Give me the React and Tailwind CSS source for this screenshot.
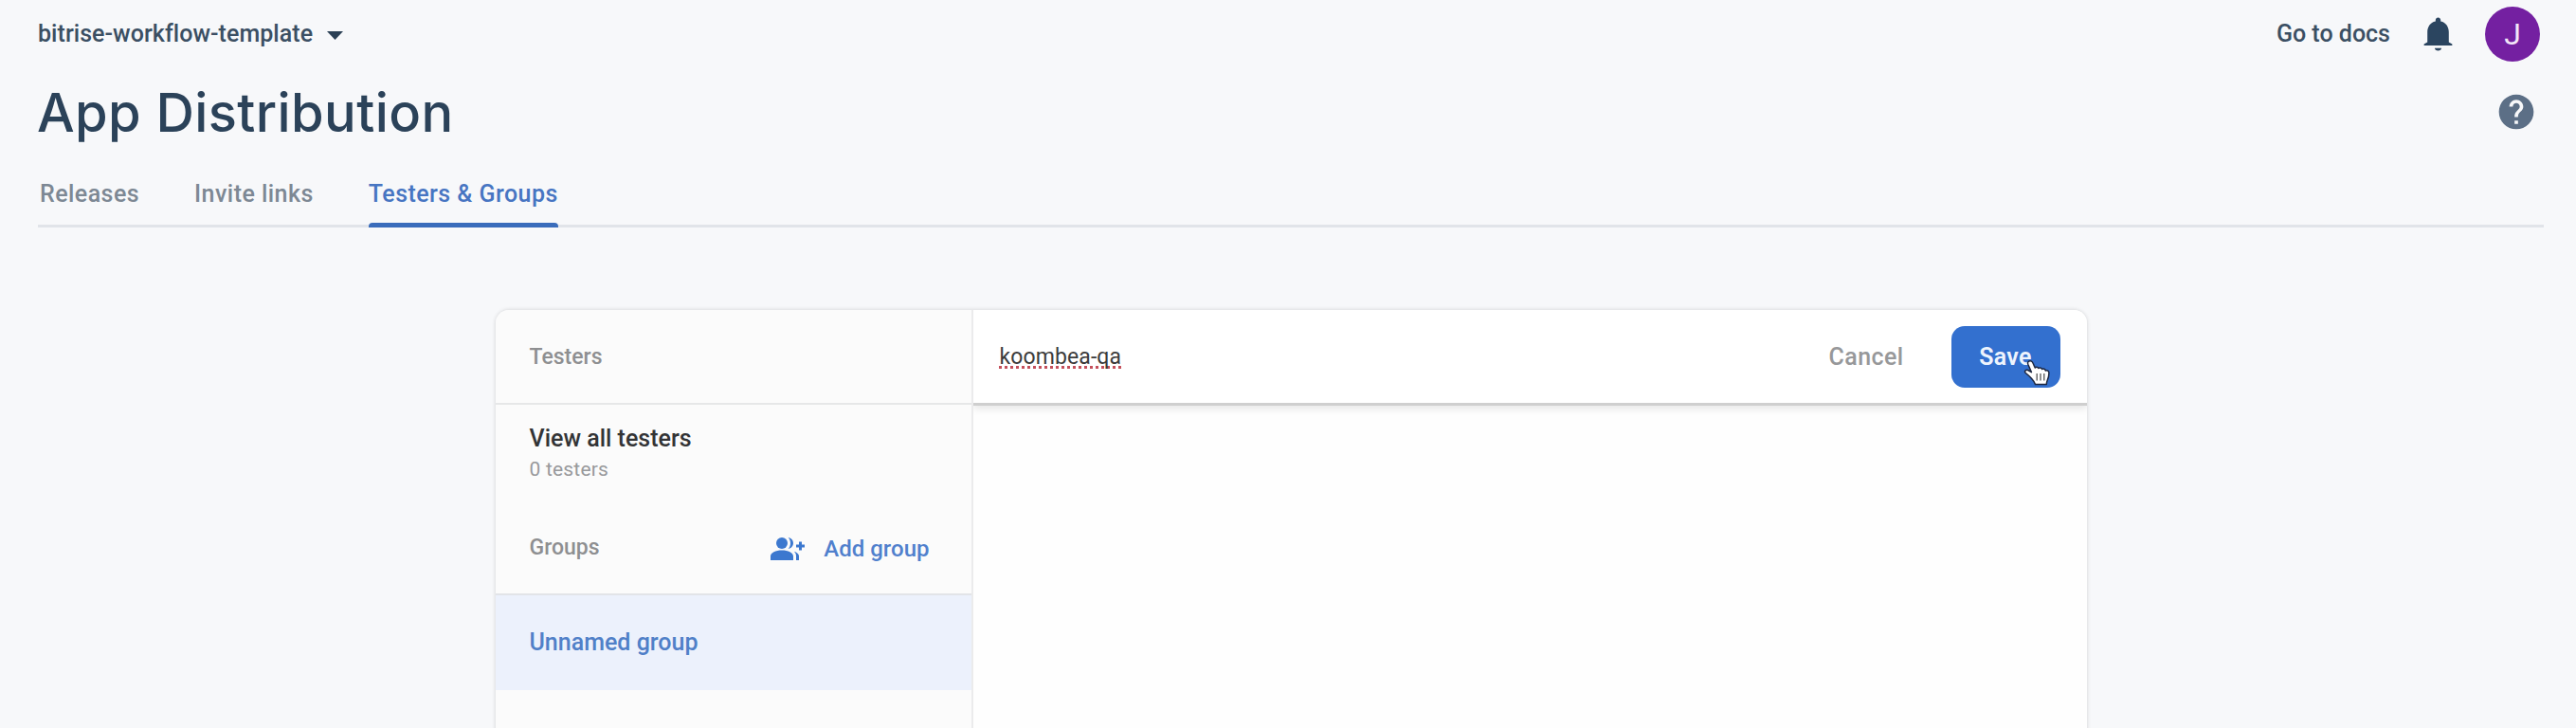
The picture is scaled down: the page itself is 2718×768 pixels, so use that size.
import React from "react";

const tabs = [
  { label: "Releases", active: false },
  { label: "Invite links", active: false },
  { label: "Testers & Groups", active: true },
];

function BellIcon() {
  return (
    <svg className="size-[43px] shrink-0" viewBox="0 0 24 24" fill="currentColor">
      <path d="M12 22c1.1 0 2-.6 2-1.500h-4c0 .9.9 1.500 2 1.500zm6.300-5v-6c0-3.070-1.640-5.640-4.800-6.320V4c0-.83-.67-1.500-1.500-1.500s-1.500.67-1.500 1.500v.68C7.340 5.360 5.700 7.920 5.700 11v6L3.700 18.200V19h16.600v-.8l-2-1.200z" />
    </svg>
  );
}

function HelpIcon() {
  return (
    <svg className="size-[44px] shrink-0" viewBox="0 0 24 24" fill="currentColor">
      <path d="M12 2C6.480 2 2 6.480 2 12s4.480 10 10 10 10-4.480 10-10S17.520 2 12 2zm1 17h-2v-2h2v2zm2.070-7.750-.9.920C13.450 12.900 13 13.500 13 15h-2v-.5c0-1.100.45-2.100 1.170-2.830l1.240-1.260c.37-.36.59-.86.59-1.410 0-1.100-.9-2-2-2s-2 .9-2 2H8c0-2.210 1.790-4 4-4s4 1.790 4 4c0 .88-.36 1.680-.93 2.250z" />
    </svg>
  );
}

function GroupAddIcon() {
  return (
    <svg className="size-[36px] shrink-0" viewBox="0 0 24 24" fill="currentColor">
      <path d="M22 9V7h-2v2h-2v2h2v2h2v-2h2V9z" />
      <circle cx="8" cy="8" r="4" />
      <path d="M8 13c-4.420 0-8 1.790-8 4.200V20h16v-2.800c0-2.410-3.580-4.200-8-4.200z" />
      <path d="M12.510 4.050C13.430 5.110 14 6.490 14 8s-.57 2.890-1.490 3.950C14.470 11.700 16 10.040 16 8s-1.530-3.700-3.490-3.950z" />
      <path d="M16.530 13.830C17.420 14.660 18 15.700 18 17v3h2v-3c0-1.450-1.590-2.510-3.470-3.170z" />
    </svg>
  );
}

function HandCursor() {
  return (
    <svg className="absolute top-[35px] left-[76px] h-[29px] w-[30px]" viewBox="0 0 30 29">
      <path
        d="M6 2C7.700 1.300 9.300 2.200 10 4l2.200 5c.8-1.200 2.900-1.200 3.600.5 1-1 3.200-.7 3.800 1 1.300-.9 3.300-.2 3.800 1.500 1.700-.7 3.500.3 3.500 2.600 0 3.300-.5 5.100-1.700 7.600-.6 1.400-.9 2.600-.9 4.300H12.500c-.6-2.100-2-3.900-4-6.200-1.700-2-4.300-4.300-6.200-5.800-1.900-1.700.3-4 2.500-3l3.600 2.100L4.800 5.200C4.200 3.700 4.700 2.500 6 2z"
        fill="#fff"
        stroke="#1d2740"
        strokeWidth="1.500"
        strokeLinejoin="round"
      />
      <path d="M14.200 15v7.500M18 15v7.500M21.800 15v7.500" stroke="#555" strokeWidth="1.300" fill="none" />
    </svg>
  );
}

function TopBar() {
  return (
    <div className="flex h-[71px] items-center justify-between pr-[4px] text-[25px] font-medium text-[#3b4f63]">
      <button className="flex items-center gap-[15px] pt-px tracking-[0.050px]">
        <span>bitrise-workflow-template</span>
        <svg className="mt-[3px] h-[9px] w-[17px]" viewBox="0 0 17 9" fill="#2b4055">
          <path d="M0 0h17L8.500 9z" />
        </svg>
      </button>
      <div className="flex items-center">
        <a className="mr-[29px] pt-px">Go to docs</a>
        <span className="mr-[28px] text-[#2b4560]">
          <BellIcon />
        </span>
        <span className="flex size-[58px] items-center justify-center rounded-full bg-[#7420a1] text-[32px] font-normal text-[#f3e6f8]">
          J
        </span>
      </div>
    </div>
  );
}

function Sidebar() {
  return (
    <aside className="w-[504px] shrink-0 border-r-2 border-[#ebebec] bg-[#fbfbfb]">
      <div className="flex h-[100px] items-center border-b-2 border-[#e6e7e8] pt-[3px] pl-[36px] text-[23px] font-medium text-[#8e8f91]">
        Testers
      </div>
      <div className="flex h-[101px] flex-col pt-[20px] pl-[36px]">
        <span className="text-[25px] leading-[32px] font-medium text-[#333436]">View all testers</span>
        <span className="mt-[2px] text-[21px] leading-[28px] tracking-[0.200px] text-[#98999b]">0 testers</span>
      </div>
      <div className="flex h-[100px] items-center justify-between border-b-2 border-[#e2e4e8] pt-[3px] pr-[44px] pl-[36px]">
        <span className="text-[23px] font-medium text-[#8e8f91]">Groups</span>
        <button className="flex items-center gap-[20px] text-[24px] font-medium text-[#5080cd]">
          <span className="text-[#3c78cf]">
            <GroupAddIcon />
          </span>
          Add group
        </button>
      </div>
      <div className="flex h-[100px] items-center bg-[#ecf1fc] pl-[36px] text-[25px] font-medium text-[#5080c8]">
        Unnamed group
      </div>
    </aside>
  );
}

function GroupPanel() {
  return (
    <section className="flex-1 overflow-hidden bg-[#fefefe]">
      <div className="flex h-[101px] items-center justify-between border-b-[3px] border-[#cfcfcf] bg-white pr-[28px] pl-[28px] shadow-[0_3px_8px_rgba(0,0,0,0.10)]">
        <span className="pt-[2px] text-[23px] tracking-[0.100px] text-[#3c3c3c] underline decoration-[#c4505c] decoration-dotted decoration-[3px] underline-offset-[2px] [text-decoration-skip-ink:none]">
          koombea-qa
        </span>
        <div className="flex items-center">
          <button className="mr-[50px] pt-px text-[25px] font-medium tracking-[0.400px] text-[#97989a]">Cancel</button>
          <button className="relative h-[65px] w-[115px] rounded-[14px] bg-[#3370cf] pt-px text-[25px] font-semibold tracking-[0.300px] text-[#eef4fd]">
            Save
            <HandCursor />
          </button>
        </div>
      </div>
    </section>
  );
}

export default function App() {
  return (
    <div className="h-[768px] overflow-hidden bg-[#f7f8fa] pr-[34px] pl-[40px] font-[Roboto,sans-serif] whitespace-nowrap">
      <TopBar />
      <div className="flex h-[94px] items-center justify-between pr-[7px]">
        <h1 className="-ml-px pt-[2px] font-[Inter,sans-serif] text-[56px] leading-[64px] font-medium tracking-[0.400px] text-[#2b4259]">
          App Distribution
        </h1>
        <span className="text-[#5c6f86]">
          <HelpIcon />
        </span>
      </div>
      <nav className="flex h-[75px] gap-[58px] border-b-[3px] border-[#e1e4e9] pl-[2px] text-[25px] font-medium tracking-[0.450px]">
        {tabs.map(({ label, active }) => (
          <a
            key={label}
            className={
              active
                ? "relative flex h-[75px] items-center pt-[4px] text-[#4775c2]"
                : "flex h-[75px] items-center pt-[4px] text-[#7d8894]"
            }
          >
            {label}
            {active && <span className="absolute inset-x-0 bottom-0 h-[5px] rounded-t-[4px] bg-[#3a6cbb]" />}
          </a>
        ))}
      </nav>
      <main className="mx-auto mt-[87px] flex h-[500px] w-[1679px] overflow-hidden rounded-t-[14px] shadow-[0_0_4px_rgba(0,0,0,0.16)]">
        <Sidebar />
        <GroupPanel />
      </main>
    </div>
  );
}
